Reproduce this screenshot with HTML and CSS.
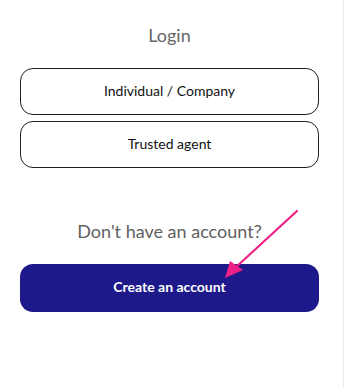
FILE: index.html
```html
<!DOCTYPE html>
<html lang="en">
<head>
<meta charset="utf-8">
<title>Login</title>
<link rel="stylesheet" href="styles.css">
</head>
<body>
<main class="page">
  <h1 class="title">Login</h1>
  <div class="options">
    <button class="option">Individual / Company</button>
    <button class="option">Trusted agent</button>
  </div>
  <p class="question">Don't have an account?</p>
  <button class="primary">Create an account</button>
  <svg class="arrow" width="345" height="388" viewBox="0 0 345 388" aria-hidden="true">
    <line x1="297" y1="211" x2="235" y2="268" stroke="#ee1f86" stroke-width="2.2" stroke-linecap="round"/>
    <polygon points="225,278 230,261 243,270" fill="#ee1f86"/>
  </svg>
</main>
</body>
</html>
```
FILE: styles.css
```css
html, body {
  margin: 0;
  padding: 0;
  background: #ffffff;
}
.page {
  position: relative;
  box-sizing: border-box;
  width: 344px;
  min-height: 388px;
  padding: 23px 24px 0 20px;
  border-right: 1px solid #ebebeb;
  font-family: Lato, "Open Sans", sans-serif;
  display: flex;
  flex-direction: column;
}
.title {
  margin: 0;
  font-size: 18px;
  line-height: 24px;
  font-weight: 400;
  color: #666666;
  text-align: center;
}
.options {
  margin-top: 21px;
  display: flex;
  flex-direction: column;
  gap: 6px;
}
.option {
  height: 47px;
  border: 1px solid #1f1f1f;
  border-radius: 13px;
  background: #ffffff;
  font-family: inherit;
  font-size: 14px;
  color: #111111;
  padding: 0 0 3px;
}
.question {
  margin: 51px 0 0;
  font-size: 18px;
  line-height: 24px;
  color: #606060;
  text-align: center;
}
.primary {
  margin-top: 21px;
  height: 48px;
  border: none;
  border-radius: 13px;
  background: #1d198b;
  color: #ffffff;
  font-family: inherit;
  font-size: 14px;
  font-weight: 700;
  padding: 0 0 4px;
}
.arrow {
  position: absolute;
  left: 0;
  top: 0;
  pointer-events: none;
}
```
